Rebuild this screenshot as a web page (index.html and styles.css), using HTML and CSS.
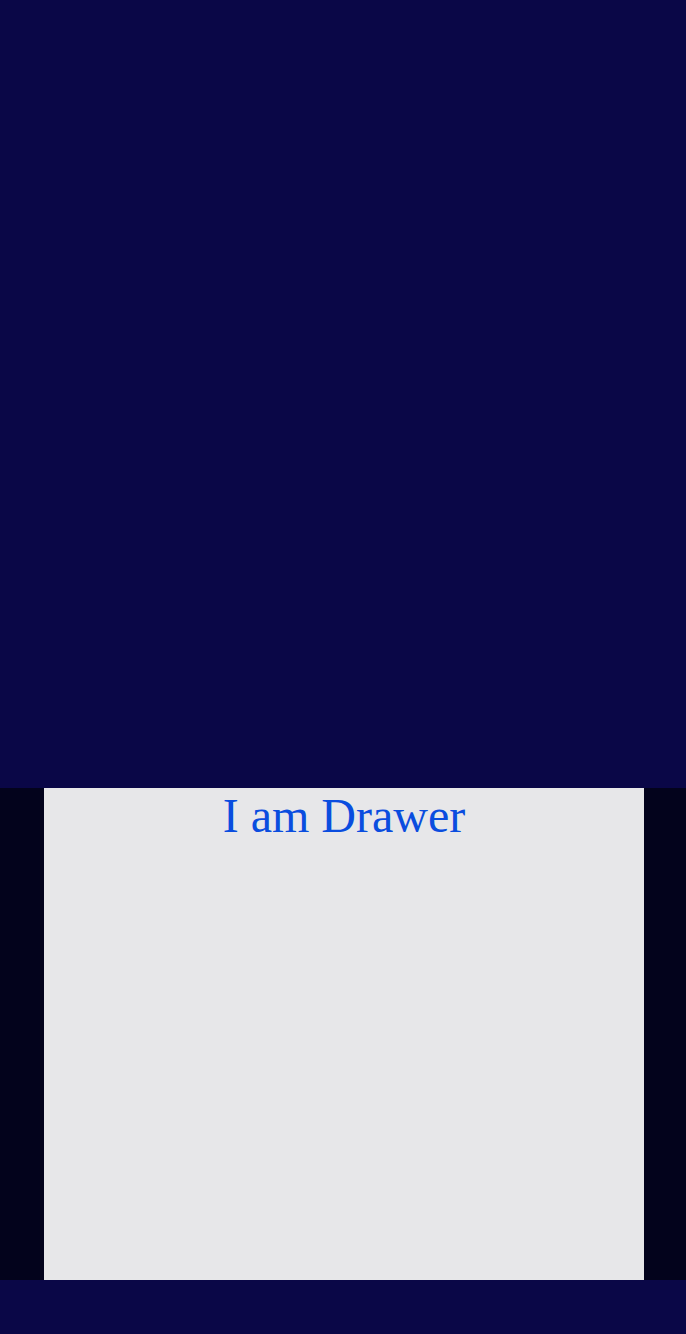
FILE: index.html
```html
<!DOCTYPE html>
<html>
<head>
<meta charset="utf-8">
<link rel="stylesheet" href="styles.css">
</head>
<body>
<div class="page">
  <div class="top"></div>
  <div class="drawer-row">
    <div class="drawer">
      <div class="title">I am Drawer</div>
    </div>
  </div>
  <div class="bottom"></div>
</div>
</body>
</html>
```
FILE: styles.css
```css
html, body {
  margin: 0;
  padding: 0;
  background: #0a0747;
}
.page {
  width: 686px;
  height: 1334px;
  display: flex;
  flex-direction: column;
  background: #0a0747;
}
.top {
  height: 788px;
  flex: none;
}
.drawer-row {
  height: 492px;
  flex: none;
  background: #03031c;
  display: flex;
  padding-left: 44px;
}
.drawer {
  width: 600px;
  background: #e7e7e9;
}
.title {
  font-family: "Liberation Serif", serif;
  font-size: 48px;
  color: #0a4ddf;
  text-align: center;
}
.bottom {
  flex: 1;
}
```
